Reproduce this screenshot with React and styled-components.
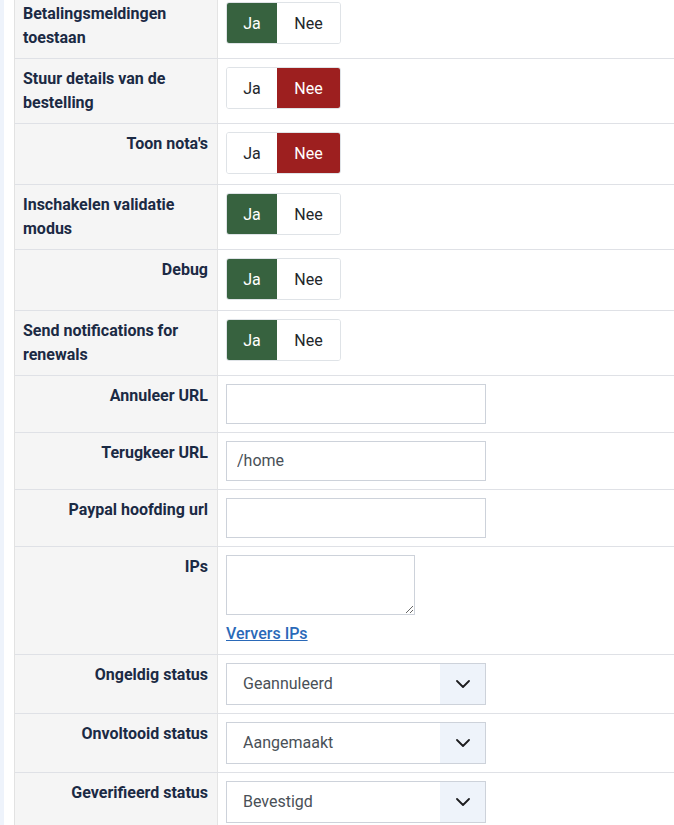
import React from 'react';
import styled, { createGlobalStyle } from 'styled-components';

const GlobalStyle = createGlobalStyle`
	html, body {
		margin: 0;
		padding: 0;
		background: #fff;
		font-family: Roboto, "Noto Sans", "Liberation Sans", sans-serif;
		font-size: 16px;
		color: #22262a;
		overflow: hidden;
	}
	* {
		box-sizing: border-box;
	}
`

const Page = styled.div`
	display: flex;
	min-height: 100vh;
`

const SideStrip = styled.div`
	width: 4px;
	flex: 0 0 4px;
	background: #eef3fb;
	margin-right: 10px;
`

const Table = styled.div`
	flex: 1;
	margin-top: -7px;
	border-left: 1px solid #e2e2e2;
	display: flex;
	flex-direction: column;
`

const Row = styled.div`
	display: grid;
	grid-template-columns: 203px 1fr;
	border-top: 1px solid #dfe1e6;

	&:last-child {
		flex: 1;
	}
`

const LabelCell = styled.div`
	background: #f5f5f5;
	border-right: 1px solid #e4e4e4;
	padding: 8px 9px 8px 8px;
	display: flex;
	justify-content: flex-end;
	align-items: flex-start;
`

const Label = styled.label`
	font-weight: 700;
	font-size: 16px;
	line-height: 24px;
	color: #1b2a44;
`

const ValueCell = styled.div`
	padding: 8px;
	display: flex;
	flex-direction: column;
	align-items: flex-start;
`

const Switcher = styled.div`
	display: inline-flex;
	height: 42px;
	margin: 0 0 2px;
	border: 1px solid #dfe3e7;
	border-radius: 3px;
	overflow: hidden;
	background: #fff;
`

const SwitchOption = styled.span`
	display: flex;
	align-items: center;
	justify-content: center;
	width: ${props => props.width}px;
	font-size: 16px;
	color: ${props => (props.active ? '#fff' : '#22262a')};
	background: ${props => (props.active ? props.tone : '#fff')};
`

const TextInput = styled.input`
	width: 260px;
	height: 40px;
	padding: 0 10px 1px;
	border: 1px solid #cdd2da;
	border-radius: 0;
	font-family: inherit;
	font-size: 16px;
	color: #495057;
	background: #fff;
	outline: none;
`

const TextArea = styled.textarea`
	width: 189px;
	height: 60px;
	padding: 6px 10px;
	border: 1px solid #cdd2da;
	border-radius: 0;
	font-family: inherit;
	font-size: 16px;
	outline: none;
`

const RefreshLink = styled.a`
	display: block;
	margin-top: 7px;
	line-height: 24px;
	font-size: 16px;
	font-weight: 500;
	color: #2a69b8;
	text-decoration: underline;
	cursor: pointer;
`

const SelectBox = styled.div`
	display: flex;
	width: 260px;
	height: 42px;
	border: 1px solid #cdd2da;
	background: #fff;
`

const NativeSelect = styled.select`
	flex: 1;
	appearance: none;
	border: none;
	background: transparent;
	padding: 0 0 2px 16px;
	font-family: inherit;
	font-size: 16px;
	color: #495057;
	outline: none;
`

const Caret = styled.span`
	width: 45px;
	display: flex;
	align-items: center;
	justify-content: center;
	background: #eef3fa;
`

const GREEN = '#37623f';
const RED = '#9d1f1f';

const YesNo = ({ value }) => (
	<Switcher>
		<SwitchOption width={50} active={value} tone={GREEN}>Ja</SwitchOption>
		<SwitchOption width={63} active={!value} tone={RED}>Nee</SwitchOption>
	</Switcher>
)

const StatusSelect = ({ value }) => (
	<SelectBox>
		<NativeSelect defaultValue={value}>
			<option>{value}</option>
		</NativeSelect>
		<Caret>
			<svg width="14" height="8" viewBox="0 0 14 8" fill="none">
				<path d="M1 1l6 6 6-6" stroke="#1d1d1f" strokeWidth="1.8" strokeLinecap="round" strokeLinejoin="round" />
			</svg>
		</Caret>
	</SelectBox>
)

const FieldRow = ({ label, children }) => (
	<Row>
		<LabelCell>
			<Label>{label}</Label>
		</LabelCell>
		<ValueCell>{children}</ValueCell>
	</Row>
)

const switches = [
	['Betalingsmeldingen toestaan', true],
	['Stuur details van de bestelling', false],
	["Toon nota's", false],
	['Inschakelen validatie modus', true],
	['Debug', true],
	['Send notifications for renewals', true],
];

const App = () => (
	<Page>
		<GlobalStyle />
		<SideStrip />
		<Table>
			{switches.map(([label, on]) => (
				<FieldRow key={label} label={label}>
					<YesNo value={on} />
				</FieldRow>
			))}
			<FieldRow label="Annuleer URL">
				<TextInput defaultValue="" />
			</FieldRow>
			<FieldRow label="Terugkeer URL">
				<TextInput defaultValue="/home" />
			</FieldRow>
			<FieldRow label="Paypal hoofding url">
				<TextInput defaultValue="" />
			</FieldRow>
			<FieldRow label="IPs">
				<TextArea />
				<RefreshLink>Ververs IPs</RefreshLink>
			</FieldRow>
			<FieldRow label="Ongeldig status">
				<StatusSelect value="Geannuleerd" />
			</FieldRow>
			<FieldRow label="Onvoltooid status">
				<StatusSelect value="Aangemaakt" />
			</FieldRow>
			<FieldRow label="Geverifieerd status">
				<StatusSelect value="Bevestigd" />
			</FieldRow>
		</Table>
	</Page>
)

export default App;
